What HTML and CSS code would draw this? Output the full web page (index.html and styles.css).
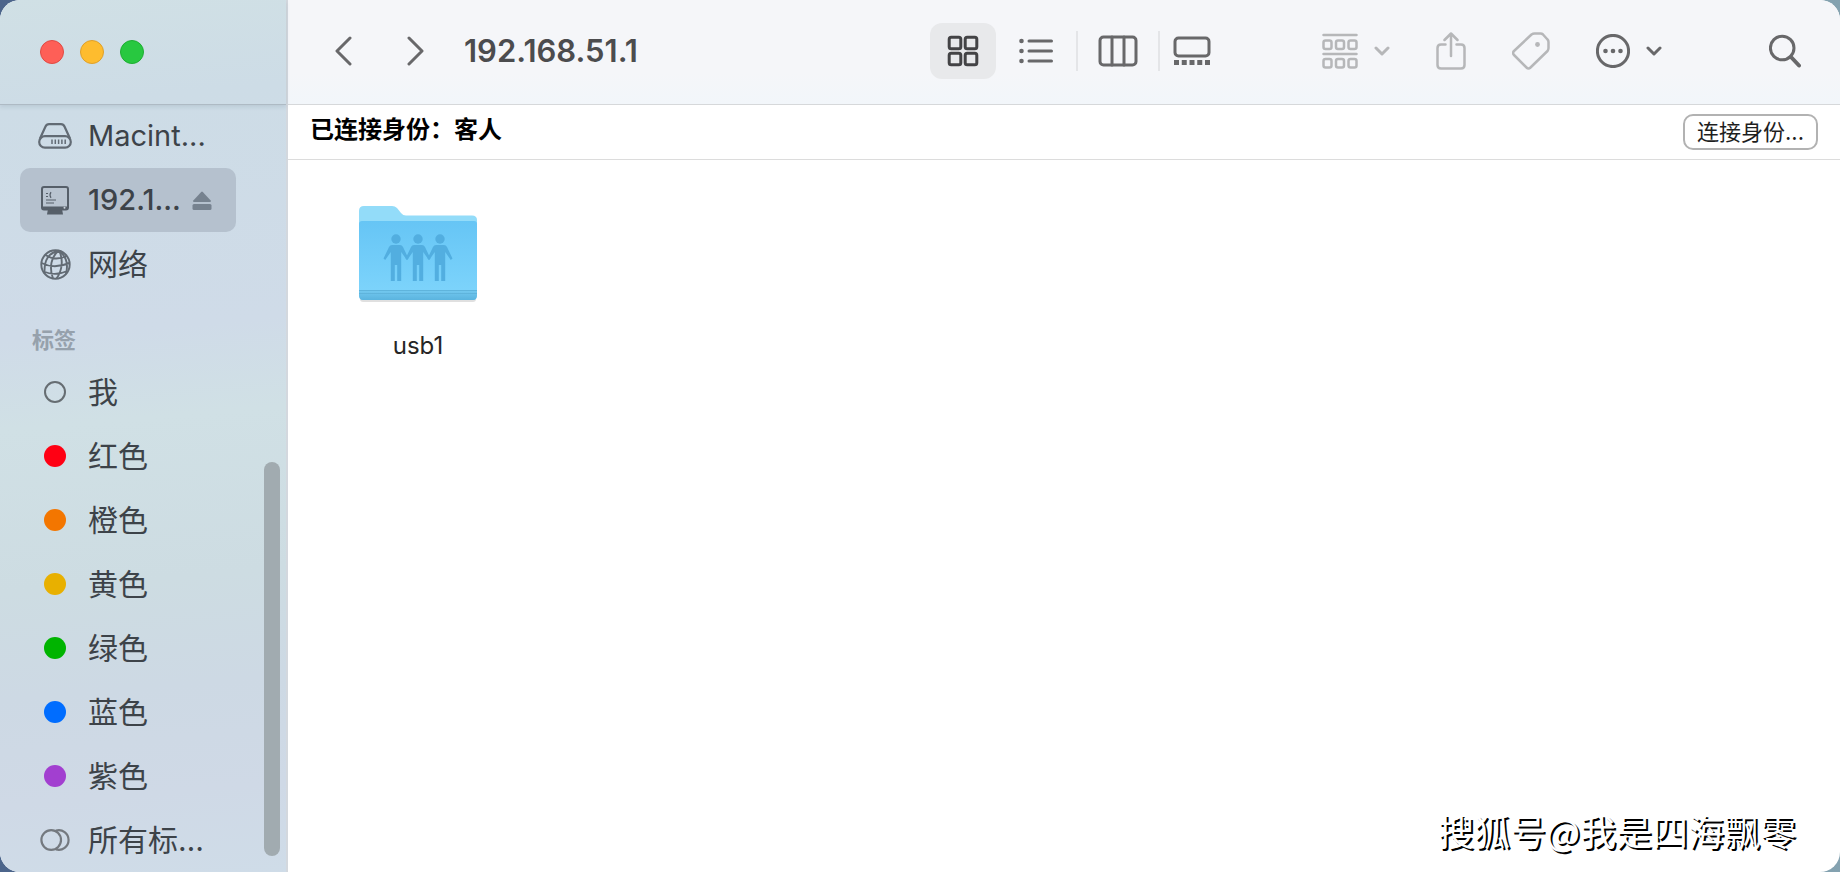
FILE: index.html
```
<!DOCTYPE html>
<html lang="zh-CN">
<head>
  <meta charset="UTF-8">
  <meta name="viewport" content="width=device-width, initial-scale=1.0">
  <title>192.168.51.1</title>
  <link rel="stylesheet" href="styles.css">
</head>
<body>
  <div class="window">
    <aside class="sidebar">
      <div class="sidebar-header">
        <button class="light close" aria-label="关闭"></button>
        <button class="light minimize" aria-label="最小化"></button>
        <button class="light zoom" aria-label="缩放"></button>
      </div>
      <nav class="places">
        <a class="place latin" href="#">
          <span class="place-icon">
            <svg width="34" height="26" viewBox="0 0 34 26" fill="none" stroke="currentColor" stroke-width="2.200">
              <path d="M2 15.500 L7.500 3.500 Q8.500 1.200 11 1.200 H23 Q25.500 1.200 26.500 3.500 L32 15.500"/>
              <rect x="1.200" y="13.200" width="31.600" height="11.500" rx="5.700"/>
              <path d="M14 16.500v4.500M17.300 16.500v4.500M20.600 16.500v4.500M23.900 16.500v4.500M27.200 16.500v4.500" stroke-width="1.500"/>
            </svg>
          </span>
          <span class="place-name">Macint...</span>
        </a>
        <a class="place latin selected" href="#">
          <span class="place-icon">
            <svg width="30" height="30" viewBox="0 0 30 30">
              <path d="M8 24h14l1 5.500H7z" fill="#565f69"/>
              <rect x="2" y="2" width="26" height="22.500" rx="2" fill="#b9c4d0" stroke="#565f69" stroke-width="2"/>
              <path d="M2 21.500h26v2a1.500 1.500 0 0 1-1.500 1.500h-23A1.500 1.500 0 0 1 2 23.500z" fill="#565f69"/>
              <circle cx="24.500" cy="22.800" r="1" fill="#cbd3dc"/>
              <path d="M6 8.500h2M6 11.500h2M11 7.200q-2 2.800 0 5.600M6 15h10M6 18h8" fill="none" stroke="#565f69" stroke-width="1.200"/>
            </svg>
          </span>
          <span class="place-name">192.1...</span>
          <svg class="eject" width="20" height="19" viewBox="0 0 20 19" fill="#76828f">
            <path d="M9.200.9q.8-.8 1.600 0L18.700 9.500q.8 1.500-.8 1.500H2.100q-1.600 0-.8-1.500z"/>
            <rect x=".5" y="13" width="19" height="6" rx="1.500"/>
          </svg>
        </a>
        <a class="place" href="#">
          <span class="place-icon">
            <svg width="31" height="31" viewBox="0 0 31 31" fill="none" stroke="currentColor" stroke-width="1.900">
              <circle cx="15.500" cy="15.500" r="14.200"/>
              <path d="M19 1.800C11 7 9 19 13 29.500M19 1.800c4 7 4 19-2.500 27.700M18.500 1.800C9 4 4 10 4.500 24.500M19 1.800C26 7 28.500 15 26 25M5.500 6Q15 12.500 26.500 7M1.500 14Q14 20.500 29.500 14M3.500 22.500q11.500 5 24-.5"/>
            </svg>
          </span>
          <span class="place-name">网络</span>
        </a>
        <h2 class="section-label">标签</h2>
        <a class="place" href="#">
          <span class="place-icon"><span class="dot hollow"></span></span>
          <span class="place-name">我</span>
        </a>
        <a class="place" href="#">
          <span class="place-icon"><span class="dot red"></span></span>
          <span class="place-name">红色</span>
        </a>
        <a class="place" href="#">
          <span class="place-icon"><span class="dot orange"></span></span>
          <span class="place-name">橙色</span>
        </a>
        <a class="place" href="#">
          <span class="place-icon"><span class="dot yellow"></span></span>
          <span class="place-name">黄色</span>
        </a>
        <a class="place" href="#">
          <span class="place-icon"><span class="dot green"></span></span>
          <span class="place-name">绿色</span>
        </a>
        <a class="place" href="#">
          <span class="place-icon"><span class="dot blue"></span></span>
          <span class="place-name">蓝色</span>
        </a>
        <a class="place" href="#">
          <span class="place-icon"><span class="dot purple"></span></span>
          <span class="place-name">紫色</span>
        </a>
        <a class="place" href="#">
          <span class="place-icon">
            <svg width="30" height="22" viewBox="0 0 30 22" fill="none" stroke="#74797f" stroke-width="2.200">
              <circle cx="11.200" cy="11" r="9.800"/>
              <path d="M16 1.600a9.800 9.800 0 1 1 0 18.800"/>
            </svg>
          </span>
          <span class="place-name">所有标…</span>
        </a>
      </nav>
      <div class="scrollbar"></div>
    </aside>

    <main class="main">
      <header class="toolbar">
        <div class="history">
          <button aria-label="后退">
            <svg width="18" height="30" viewBox="0 0 18 30"><path d="M16 2 3 15l13 13"/></svg>
          </button>
          <button aria-label="前进">
            <svg width="18" height="30" viewBox="0 0 18 30"><path d="M2 2l13 13L2 28"/></svg>
          </button>
        </div>
        <h1 class="title">192.168.51.1</h1>
        <div class="views">
          <button class="view active" aria-label="图标">
            <svg width="32" height="32" viewBox="0 0 32 32">
              <rect x="2.200" y="2.200" width="11.600" height="11.600" rx="2"/>
              <rect x="18.200" y="2.200" width="11.600" height="11.600" rx="2"/>
              <rect x="2.200" y="18.200" width="11.600" height="11.600" rx="2"/>
              <rect x="18.200" y="18.200" width="11.600" height="11.600" rx="2"/>
            </svg>
          </button>
          <button class="view" aria-label="列表">
            <svg width="34" height="26" viewBox="0 0 34 26">
              <path d="M10 3h22.500M10 13h22.500M10 23h22.500"/>
              <g fill="currentColor" stroke="none"><circle cx="2.500" cy="3" r="2.300"/><circle cx="2.500" cy="13" r="2.300"/><circle cx="2.500" cy="23" r="2.300"/></g>
            </svg>
          </button>
          <span class="divider"></span>
          <button class="view" aria-label="分栏">
            <svg width="40" height="32" viewBox="0 0 40 32">
              <rect x="2" y="2" width="36" height="28" rx="3.500"/>
              <path d="M14 2v28M26 2v28"/>
            </svg>
          </button>
          <span class="divider"></span>
          <button class="view narrow" aria-label="画廊">
            <svg width="38" height="30" viewBox="0 0 38 30">
              <rect x="2" y="2" width="34" height="18" rx="3.500"/>
              <path d="M1 26.500h36" stroke-dasharray="5 2.750" class="thumbs"/>
            </svg>
          </button>
        </div>
        <div class="tools">
          <button class="tool dim" aria-label="分组">
            <svg width="36" height="36" viewBox="0 0 36 36">
              <path d="M1.500 2h33M1.500 21h33"/>
              <rect x="1.500" y="7.500" width="8" height="8.500" rx="2"/>
              <rect x="14" y="7.500" width="8" height="8.500" rx="2"/>
              <rect x="26.500" y="7.500" width="8" height="8.500" rx="2"/>
              <rect x="1.500" y="26" width="8" height="8.500" rx="2"/>
              <rect x="14" y="26" width="8" height="8.500" rx="2"/>
              <rect x="26.500" y="26" width="8" height="8.500" rx="2"/>
            </svg>
            <svg class="chevron" width="16" height="10" viewBox="0 0 16 10"><path d="M2 2l6 6 6-6"/></svg>
          </button>
          <button class="tool dim" aria-label="共享">
            <svg width="30" height="38" viewBox="0 0 30 38">
              <path d="M9.500 12.500H5Q1.500 12.500 1.500 16V33q0 3.500 3.500 3.500H25q3.500 0 3.500-3.500V16q0-3.500-3.500-3.500h-4.500M15 24V2M8.500 8 15 1.500 21.500 8"/>
            </svg>
          </button>
          <button class="tool dim" aria-label="标签">
            <svg width="38" height="38" viewBox="0 0 38 38">
              <path d="M2 19 19.500 2.500Q21 1.500 22.500 1.500H28.500Q30 1.500 31 2.500L35.500 7.500Q36.500 8.500 36.500 10V16Q36.500 17.500 35.500 19L18.500 35.500Q16.500 37.500 14.500 35.500L2 23Q0 21 2 19z"/>
              <circle cx="25.500" cy="12.500" r="2.400" fill="currentColor" stroke="none"/>
            </svg>
          </button>
          <button class="tool" aria-label="更多">
            <svg width="34" height="34" viewBox="0 0 34 34">
              <circle cx="17" cy="17" r="15.600"/>
              <g fill="currentColor" stroke="none"><circle cx="9.500" cy="17" r="2.300"/><circle cx="17" cy="17" r="2.300"/><circle cx="24.500" cy="17" r="2.300"/></g>
            </svg>
            <svg class="chevron" width="16" height="10" viewBox="0 0 16 10"><path d="M2 2l6 6 6-6"/></svg>
          </button>
        </div>
        <button class="search" aria-label="搜索">
          <svg width="32" height="34" viewBox="0 0 32 34">
            <circle cx="13.200" cy="14" r="11.800"/>
            <path d="M22 23l8 8.500" class="handle"/>
          </svg>
        </button>
      </header>

      <div class="identity">
        <span>已连接身份：客人</span>
        <button class="connect">连接身份...</button>
      </div>

      <section class="files">
        <a class="file" href="#">
          <svg width="120" height="98" viewBox="0 0 120 98">
            <defs>
              <linearGradient id="front" x1="0" y1="0" x2="0" y2="1">
                <stop offset="0" stop-color="#66c5f5"/>
                <stop offset="1" stop-color="#7fd5fc"/>
              </linearGradient>
              <linearGradient id="edge" x1="0" y1="0" x2="0" y2="1">
                <stop offset="0" stop-color="#74c9f0"/>
                <stop offset="1" stop-color="#5bb4df"/>
              </linearGradient>
              <g id="person">
                <circle cx="0" cy="34" r="4.700"/>
                <path d="M-4 40H4Q6 40 7 42L12.500 53.500 10.800 55 5.200 47V76H1.200V60H-1.200V76H-5.200V47L-10.800 55-12.500 53.500-7 42Q-6 40-4 40z"/>
              </g>
            </defs>
            <rect x="2" y="89" width="116" height="8" rx="3" fill="#000" opacity=".12"/>
            <path d="M1 20V6Q1 1 6 1H34Q37 1 39 3L43 8Q45 10.500 48 10.500H114Q119 10.500 119 15V30H1z" fill="#93dcf9"/>
            <path d="M1 19Q1 16 4 16H116Q119 16 119 19V90Q119 95 115 95H5Q1 95 1 90z" fill="url(#front)"/>
            <path d="M1 85H119V90Q119 95 115 95H5Q1 95 1 90z" fill="url(#edge)"/>
            <path d="M1 85.500H119M1 88.500H119" stroke="#5fb4dc" stroke-width="1"/>
            <g fill="#52aee0">
              <use href="#person" x="38"/>
              <use href="#person" x="60"/>
              <use href="#person" x="82"/>
            </g>
          </svg>
          <span class="file-name">usb1</span>
        </a>
      </section>
    </main>

    <div class="watermark">搜狐号@我是四海飘零</div>
  </div>
</body>
</html>
```
FILE: styles.css
```
* { box-sizing: border-box; }
body {
  margin: 0;
  font-family: Inter, "Noto Sans CJK SC", sans-serif;
  background: linear-gradient(90deg, #4c658b, #84a2b0);
}
h1, h2 {
  margin: 0;
}
a {
  color: inherit;
  text-decoration: none;
}
button {
  padding: 0;
  border: none;
  background: none;
  font-family: inherit;
  color: inherit;
}
svg {
  display: block;
  flex-shrink: 0;
}
.window {
  position: relative;
  display: grid;
  grid-template-columns: 288px 1fr;
  min-height: 100vh;
  border-radius: 20px;
  overflow: hidden;
  background: #fff;
}

/* sidebar */
.sidebar {
  position: relative;
  border-right: 2px solid #d3d8de;
  background: linear-gradient(175deg, #d0e0e5 0%, #cddce6 12%, #cfdbe8 38%, #d0e0e5 48%, #cddce2 66%, #cdd9e4 78%, #cfd9e6 90%, #cfdce8 100%);
}
.sidebar-header {
  display: flex;
  align-items: center;
  gap: 16px;
  height: 104px;
  padding-left: 40px;
  box-shadow: 0 1px 0 #aebac4, 0 3px 4px rgba(80, 100, 120, 0.15);
}
.light {
  width: 24px;
  height: 24px;
  border-radius: 50%;
}
.close {
  background: #fe5f57;
  border: 1px solid #e04a43;
}
.minimize {
  background: #febc2e;
  border: 1px solid #dfa02a;
}
.zoom {
  background: #28c840;
  border: 1px solid #1eae32;
}
.places {
  padding: 0 50px 0 20px;
}
.place {
  display: flex;
  align-items: center;
  height: 64px;
  padding: 0 24px 0 17px;
  border-radius: 10px;
  font-size: 30px;
  line-height: 40px;
  color: #3d4349;
  white-space: nowrap;
}
.place.latin {
  font-size: 29px;
}
.place.selected {
  background: #b5c1ce;
  font-weight: 500;
}
.place-icon {
  display: flex;
  justify-content: center;
  width: 36px;
  margin-right: 15px;
  flex-shrink: 0;
  color: #626b74;
}
.eject {
  margin-left: auto;
}
.section-label {
  padding: 24px 0 0 12px;
  font-size: 22px;
  line-height: 40px;
  font-weight: 700;
  color: #96a1ac;
}
.dot {
  width: 22px;
  height: 22px;
  border-radius: 50%;
}
.hollow { border: 2px solid #666d72; }
.red { background: #ff0013; }
.orange { background: #f37600; }
.yellow { background: #e8b000; }
.green { background: #00b400; }
.blue { background: #006dff; }
.purple { background: #a23fd0; }
.scrollbar {
  position: absolute;
  right: 6px;
  bottom: 16px;
  width: 16px;
  height: 394px;
  border-radius: 8px;
  background: #a1abb0;
}

/* toolbar */
.toolbar {
  display: flex;
  align-items: center;
  height: 105px;
  padding: 0 39px 2px 46px;
  border-bottom: 1px solid #d6d8da;
  background: linear-gradient(#f5f6f9 70%, #f2f6fa);
  color: #68686a;
}
.toolbar svg {
  fill: none;
  stroke: currentColor;
  stroke-width: 3;
  stroke-linecap: round;
  stroke-linejoin: round;
}
.toolbar .dim svg:first-child {
  stroke-width: 2.5;
}
.history {
  display: flex;
  gap: 55px;
}
.title {
  flex: 1;
  margin-left: 39px;
  font-size: 31px;
  line-height: 40px;
  font-weight: 600;
  color: #4c4c4e;
}
.views {
  display: flex;
  align-items: center;
  gap: 7px;
}
.view {
  display: flex;
  align-items: center;
  justify-content: center;
  width: 66px;
  height: 56px;
  border-radius: 12px;
}
.view.active {
  background: #e8e9eb;
  color: #434345;
}
.view.narrow {
  width: 50px;
}
.thumbs {
  stroke-width: 5;
  stroke-linecap: butt;
}
.handle {
  stroke-width: 4;
}
.divider {
  width: 2px;
  height: 40px;
  background: #e4e5e8;
}
.tools {
  display: flex;
  align-items: center;
  gap: 46px;
  margin: 0 107px 0 105px;
}
.tool {
  display: flex;
  align-items: center;
  gap: 16px;
}
.dim {
  color: #b6b7b9;
}

/* identity bar */
.identity {
  display: flex;
  align-items: center;
  justify-content: space-between;
  height: 55px;
  padding: 0 22px;
  border-bottom: 1px solid #dcdcdc;
  font-size: 24px;
  line-height: 32px;
  font-weight: 700;
  color: #000;
}
.identity span {
  padding-bottom: 4px;
}
.connect {
  height: 36px;
  padding: 0 12px;
  border: 2px solid #b2b2b2;
  border-radius: 10px;
  background: #fff;
  font-size: 22px;
  line-height: 32px;
  color: #1e1e1e;
}

/* files */
.files {
  display: flex;
  flex-wrap: wrap;
  padding: 45px 70px;
}
.file {
  display: flex;
  flex-direction: column;
  align-items: center;
  gap: 27px;
}
.file-name {
  font-size: 24px;
  line-height: 32px;
  color: #262626;
}
.watermark {
  position: absolute;
  right: 44px;
  bottom: 18px;
  font-family: "Noto Sans CJK SC", sans-serif;
  font-size: 36px;
  line-height: 48px;
  color: #fff;
  text-shadow: 2px 2px 0 #000;
}
```
